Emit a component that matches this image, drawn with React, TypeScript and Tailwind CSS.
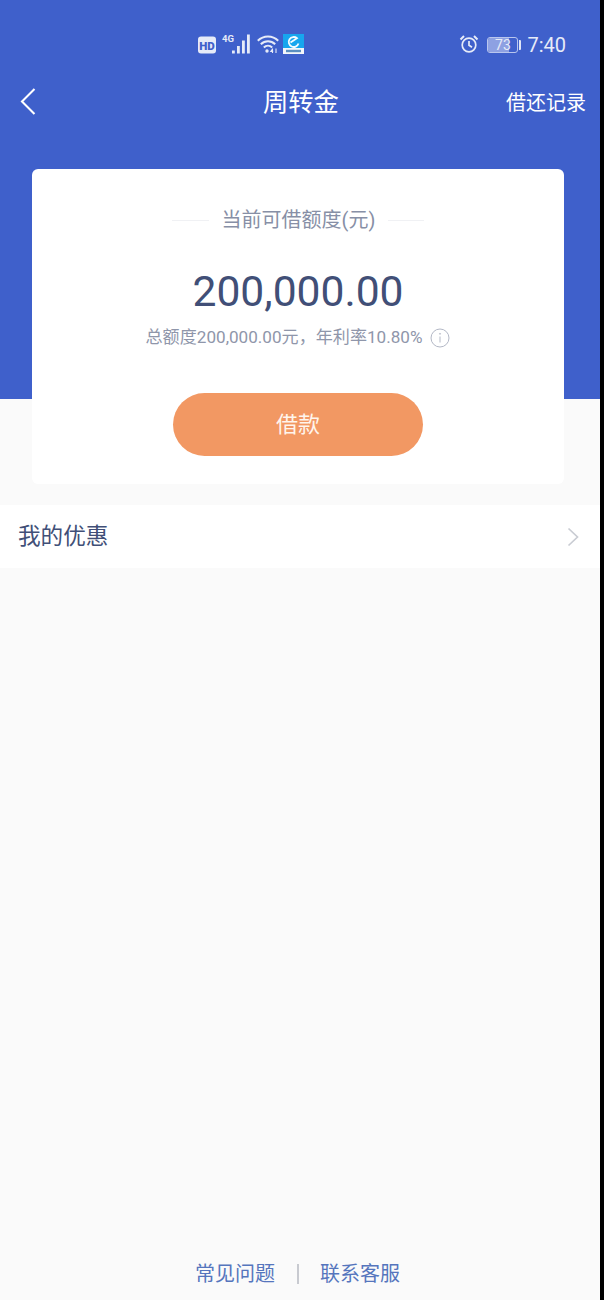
const cjk = "font-['Roboto','Noto_Sans_CJK_SC',sans-serif]";

function StatusBar() {
  return (
    <div className="flex h-[88px] w-full shrink-0 pt-[33px]">
      <div className="ml-[198px] flex h-[22px] items-center">
        <svg width="18" height="18" viewBox="0 0 18 18" className="mr-[6px] mt-[1px]">
          <rect x="0" y="0.5" width="18" height="17" rx="3" fill="#e6ebf8" />
          <text x="9" y="13.5" textAnchor="middle" fontFamily="Roboto" fontWeight="900" fontSize="11.5" fill="#3f60cb">HD</text>
        </svg>
        <svg width="30" height="22" viewBox="0 0 30 22" className="mr-[5px]">
          <text x="0" y="8.5" fontFamily="Roboto" fontWeight="700" fontSize="9.5" fill="#e6ebf8">4G</text>
          <rect x="10" y="17.5" width="2.8" height="3" fill="#e6ebf8" />
          <rect x="15" y="13" width="2.8" height="7.5" fill="#e6ebf8" />
          <rect x="20" y="7.5" width="2.8" height="13" fill="#e6ebf8" />
          <rect x="25" y="1.5" width="2.8" height="19" fill="#e6ebf8" />
        </svg>
        <svg width="22" height="20" viewBox="0 0 22 20" className="mr-[4px]">
          <path d="M0.8 6.8 C6.5 1 15.5 1 21.2 6.8" fill="none" stroke="#e6ebf8" strokeWidth="2" />
          <path d="M3.8 10.2 C8 6.2 14 6.2 18.2 10.2" fill="none" stroke="#e6ebf8" strokeWidth="2" />
          <path d="M6.8 13.4 C9.2 11.2 12.8 11.2 15.2 13.4" fill="none" stroke="#e6ebf8" strokeWidth="2" />
          <circle cx="10" cy="17" r="1.7" fill="#e6ebf8" />
          <path d="M15.5 15 L13.8 17.4 H16.2 M15.5 14.5 V19 M19 14.5 V19" fill="none" stroke="#e6ebf8" strokeWidth="1.1" />
        </svg>
        <svg width="21" height="20" viewBox="0 0 21 20">
          <rect width="21" height="20" fill="#17a6ee" />
          <rect y="14" width="21" height="6" fill="#f2f6fa" />
          <path d="M15.5 9.5 A5 5 0 1 1 14 4.2 L7.5 8.6" fill="none" stroke="#f2fbff" strokeWidth="1.8" />
          <rect x="3" y="15.8" width="15" height="2.4" fill="#5a8fc0" />
        </svg>
      </div>
      <div className="ml-auto mr-[34px] mt-[1px] flex h-[22px] items-center">
        <svg width="20" height="20" viewBox="0 0 20 20" className="mb-[2px] mr-[8px]" fill="none" stroke="#e6ebf8" strokeWidth="1.7">
          <circle cx="10" cy="11" r="6.8" />
          <path d="M10 7 V11.3 L13 13.2" />
          <path d="M1.5 5.5 L5 2 M18.5 5.5 L15 2" strokeWidth="2" />
        </svg>
        <div className="relative mb-[1px] mr-[1px] h-[16px] w-[31px] overflow-hidden rounded-[3px] border border-[#b9c6ee]">
          <div className="h-full w-[71%] bg-[#8ea1e2]" />
          <span className="absolute inset-0 flex items-center justify-center font-['Roboto',sans-serif] text-[14px] leading-none text-[#e6ebf8]">73</span>
        </div>
        <div className="mb-[1px] mr-[6px] h-[10px] w-[2px] rounded-r-[1px] bg-[#dfe5f7]" />
        <span className="font-['Roboto',sans-serif] text-[20px] leading-none text-[#e6ebf8]">7:40</span>
      </div>
    </div>
  );
}

function NavBar() {
  return (
    <div className="flex h-[30px] w-full shrink-0 items-center text-white">
      <svg width="16" height="27" viewBox="0 0 16 27" className="mb-[3px] ml-[20px]" fill="none" stroke="#ffffff" strokeWidth="2.1">
        <path d="M14.5 1 L2 13.5 L14.5 26" />
      </svg>
      <span className="ml-[227px] text-[25.3px] leading-none">周转金</span>
      <span className="ml-auto mr-[14px] text-[20px] leading-none">借还记录</span>
    </div>
  );
}

function Card() {
  return (
    <div className="ml-[32px] flex h-[315px] w-[532px] flex-col items-center rounded-[6px] bg-white">
      <div className="mt-[39px] flex h-[24px] items-center gap-[13px]">
        <div className="h-px w-[37px] bg-[#f0f1f4]" />
        <span className="text-[20px] leading-none text-[#878fa6]">当前可借额度(元)</span>
        <div className="h-px w-[36px] bg-[#f0f1f4]" />
      </div>
      <div className="mt-[30px] flex h-[58px] items-center text-[42.6px] leading-none text-[#414f77]">200,000.00</div>
      <div className="mt-[6px] flex h-[24px] items-center text-[17.1px] leading-none text-[#8f96aa]">
        <span>总额度200,000.00元，年利率10.80%</span>
        <svg width="20" height="20" viewBox="0 0 20 20" className="ml-[8px]" fill="none" stroke="#b3b8c6" strokeWidth="1">
          <circle cx="10" cy="10" r="9" />
          <path d="M10 8.5 V14.5" />
          <circle cx="10" cy="5.8" r="0.5" />
        </svg>
      </div>
      <button className="mt-[43px] flex h-[63px] w-[250px] items-center justify-center rounded-full bg-[#f29863] text-[22px] leading-none text-[#fff5ec]">借款</button>
    </div>
  );
}

export default function App() {
  return (
    <div className={`flex h-[1300px] w-[604px] overflow-hidden bg-black ${cjk}`}>
      <div className="relative flex h-full w-[600px] shrink-0 flex-col bg-[#fafafa]">
        <div className="absolute inset-x-0 top-0 h-[399px] bg-[#3f60cb]" />
        <div className="relative flex h-full flex-col">
          <StatusBar />
          <NavBar />
          <div className="h-[51px] shrink-0" />
          <Card />
          <div className="mt-[21px] flex h-[63px] items-center justify-between bg-white pl-[18px] pr-[21px]">
            <span className="mt-[1px] text-[22.6px] leading-none text-[#414f77]">我的优惠</span>
            <svg width="12" height="20" viewBox="0 0 12 20" fill="none" stroke="#c9ccd3" strokeWidth="1.7">
              <path d="M1.5 1.5 L10.5 10 L1.5 18.5" />
            </svg>
          </div>
          <div className="mt-auto mb-[14px] flex h-[24px] items-center pl-[195px] text-[20px] leading-none text-[#5575bd]">
            <span>常见问题</span>
            <div className="ml-[22px] mr-[21px] h-[20px] w-[2px] bg-[#c8cad0]" />
            <span>联系客服</span>
          </div>
        </div>
      </div>
    </div>
  );
}
